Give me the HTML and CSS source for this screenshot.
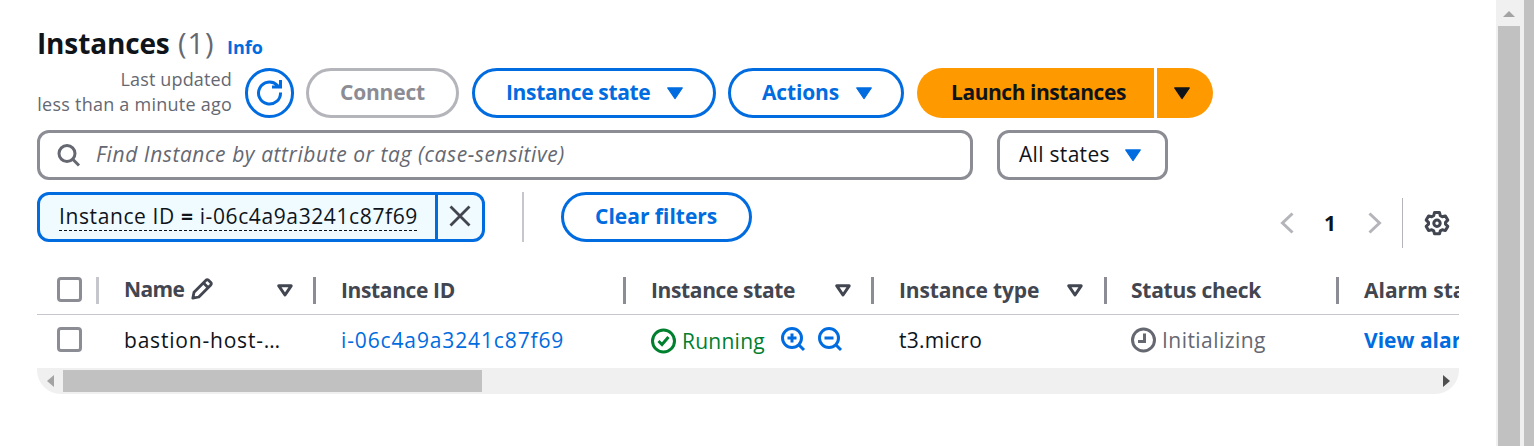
FILE: index.html
```html
<!DOCTYPE html>
<html lang="en">
<head>
<meta charset="utf-8">
<title>Instances</title>
<link rel="stylesheet" href="styles.css">
</head>
<body>
<div class="page">
<main class="panel">
  <header class="title"><h1>Instances</h1><span class="count">(1)</span><a class="info">Info</a></header>

  <div class="toolbar">
    <div class="updated"><span class="u1">Last updated</span><span class="u2">less than a minute ago</span></div>
    <button class="btn refresh"><svg width="28" height="28" viewBox="0 0 28 28" fill="none" stroke="currentColor" stroke-width="3"><path d="M24.500 13.500A11 11 0 1 1 21 6L23.500 8.500M24.500 1v7h-8.500"/></svg></button>
    <button class="btn connect"><span>Connect</span></button>
    <button class="btn state"><span>Instance state</span><svg class="caret" viewBox="0 0 16 13"><path d="M1.500 1.500h13L8 11z"/></svg></button>
    <button class="btn actions"><span>Actions</span><svg class="caret" viewBox="0 0 16 13"><path d="M1.500 1.500h13L8 11z"/></svg></button>
    <div class="launch"><button class="launch-main"><span>Launch instances</span></button><button class="launch-more"><svg class="caret" viewBox="0 0 16 13"><path d="M1.500 1.500h13L8 11z"/></svg></button></div>
  </div>

  <div class="filters">
    <div class="search"><svg width="24" height="24" viewBox="0 0 24 24" fill="none" stroke="currentColor" stroke-width="3"><circle cx="10" cy="10.500" r="8"/><path d="M15.500 16l6.500 6.500"/></svg><span>Find Instance by attribute or tag (case-sensitive)</span></div>
    <div class="select"><span>All states</span><svg class="caret" viewBox="0 0 16 13"><path d="M1.500 1.500h13L8 11z"/></svg></div>
  </div>

  <div class="tokens">
    <div class="token"><div class="token-label"><span>Instance ID <b>=</b> i-06c4a9a3241c87f69</span></div><div class="token-x"><svg width="22" height="22" viewBox="0 0 22 22" fill="none" stroke="currentColor" stroke-width="2.800"><path d="M1.500 1.500l19 19M20.500 1.500l-19 19"/></svg></div></div>
    <i class="rule"></i>
    <button class="btn clear"><span>Clear filters</span></button>
    <nav class="pager">
      <svg width="14" height="22" viewBox="0 0 14 22" fill="none" stroke="currentColor" stroke-width="3"><path d="M12.500 1.500L2.500 11l10 9.500"/></svg>
      <b>1</b>
      <svg width="14" height="22" viewBox="0 0 14 22" fill="none" stroke="currentColor" stroke-width="3"><path d="M1.500 1.500L11.500 11l-10 9.500"/></svg>
      <i></i>
      <svg class="gear" width="26" height="26" viewBox="0 0 26 26" fill="none" stroke="currentColor" stroke-width="3" stroke-linejoin="round"><path d="M10.500 2.500h5l.8 3.200 2 1.100 3.100-.9 2.400 4.200-2.300 2.300v1.800l2.300 2.200-2.400 4.200-3.100-.9-2 1.200-.8 2.900h-5l-.8-2.900-2-1.200-3.100.9-2.400-4.200 2.300-2.200v-1.800l-2.300-2.300 2.400-4.200 3.100.9 2-1.100z"/><circle cx="13" cy="13.200" r="3.200"/></svg>
    </nav>
  </div>

  <section class="table">
    <div class="row head">
      <div class="cell"><i class="check"></i></div>
      <div class="cell name"><span>Name</span><svg class="pencil" width="22" height="22" viewBox="0 0 22 22" fill="none" stroke="currentColor" stroke-width="2.800" stroke-linejoin="round"><path d="M1.800 20.200l1.200-6L15 2.200q1.200-1 2.500 0l2.300 2.300q1 1.200 0 2.500L7.800 19z"/><path d="M12.500 5l4.500 4.500"/></svg><svg class="sort" width="16" height="13" viewBox="0 0 16 13"><path d="M1.800 1.800h12.400L8 11z"/></svg></div>
      <div class="cell"><span class="t-id">Instance ID</span></div>
      <div class="cell"><span class="t-state">Instance state</span><svg class="sort" width="16" height="13" viewBox="0 0 16 13"><path d="M1.800 1.800h12.400L8 11z"/></svg></div>
      <div class="cell"><span class="t-type">Instance type</span><svg class="sort type-sort" width="16" height="13" viewBox="0 0 16 13"><path d="M1.800 1.800h12.400L8 11z"/></svg></div>
      <div class="cell status"><span class="t-status">Status check</span></div>
      <div class="cell"><span class="t-alarm">Alarm status</span></div>
    </div>
    <div class="row body">
      <div class="cell"><i class="check"></i></div>
      <div class="cell"><span class="v-name">bastion-host-…</span></div>
      <div class="cell"><a class="v-id">i-06c4a9a3241c87f69</a></div>
      <div class="cell running"><svg width="26" height="26" viewBox="0 0 26 26" fill="none" stroke="currentColor" stroke-width="3"><circle cx="12.500" cy="13" r="11"/><path d="M7.500 13l3.500 3.500 6.500-7.500"/></svg><span>Running</span>
        <svg class="zoom in" width="26" height="26" viewBox="0 0 26 26" fill="none" stroke="currentColor" stroke-width="3"><circle cx="12" cy="12" r="9.500"/><path d="M18.500 18.500l5.500 5.500M7.500 12h9M12 7.500v9"/></svg>
        <svg class="zoom" width="26" height="26" viewBox="0 0 26 26" fill="none" stroke="currentColor" stroke-width="3"><circle cx="12" cy="12" r="9.500"/><path d="M18.500 18.500l5.500 5.500M7.500 12h9"/></svg></div>
      <div class="cell"><span class="v-type">t3.micro</span></div>
      <div class="cell status init"><svg width="26" height="26" viewBox="0 0 26 26" fill="none" stroke="currentColor" stroke-width="3"><circle cx="12.500" cy="13" r="11"/><path d="M13.500 6.500v8H7"/></svg><span>Initializing</span></div>
      <div class="cell"><a class="v-alarm">View alarms</a></div>
    </div>
    <div class="hscroll"><svg width="7" height="12" viewBox="0 0 7 12"><path d="M7 0v12L0 6z" fill="#a3a3a3"/></svg><i></i><svg class="right" width="7" height="12" viewBox="0 0 7 12"><path d="M0 0v12l7-6z" fill="#505050"/></svg></div>
  </section>
</main>
<aside class="vscroll"><svg width="12" height="6" viewBox="0 0 12 6"><path d="M6 0l6 6H0z" fill="#a3a3a3"/></svg><i></i></aside>
<aside class="edge"></aside>
</div>
</body>
</html>
```

FILE: styles.css
```css
* { box-sizing: border-box; }
body { margin: 0; background: #fff; color: #0f141a; font: 21px/30px "Open Sans", "Noto Sans", sans-serif; }
.page { display: flex; height: 446px; overflow: hidden; white-space: nowrap; }
.panel { width: 1496px; padding-left: 37px; }
svg { display: block; flex: none; }
button { font: inherit; padding: 0; border: 0; }
.title { display: flex; align-items: baseline; height: 68px; padding-top: 23px; }
h1 { margin: 0; width: 141px; font-size: 28px; line-height: 40px; letter-spacing: -.15px; }
.count { width: 49px; font-size: 29px; letter-spacing: .9px; color: #656871; }
.info { font-size: 18px; font-weight: 700; color: #006ce0; }

.toolbar { display: flex; height: 50px; }
.updated { display: flex; flex-direction: column; width: 195px; height: 50px; margin: -1px 13px 0 0; font-size: 18px; line-height: 25px; letter-spacing: .24px; color: #656871; text-align: right; }
.u1 { letter-spacing: .15px; }
.btn { display: flex; align-items: center; height: 50px; border: 3px solid #006ce0; border-radius: 25px; color: #006ce0; background: #fff; font-weight: 700; padding-left: 31px; }
.btn span, .launch-main span { padding-bottom: 2px; text-align: left; }
.caret { width: 18px; height: 15px; fill: currentColor; stroke: currentColor; stroke-linejoin: round; }
.refresh { width: 49px; padding: 0; justify-content: center; margin-right: 12px; }
.connect { width: 153px; margin-right: 13px; color: #8c8c94; border-color: #b4b4bb; letter-spacing: -.2px; }
.state { width: 244px; margin-right: 12px; letter-spacing: -.35px; }
.actions { width: 176px; margin-right: 13px; letter-spacing: -.15px; }
.state span { width: 160px; }
.actions span { width: 93px; }
.launch { display: flex; gap: 3px; }
.launch button { background: #ff9900; color: #0f141a; font-weight: 700; display: flex; align-items: center; }
.launch .launch-main { width: 237px; padding-left: 34px; border-radius: 25px 0 0 25px; letter-spacing: -.45px; }
.launch .launch-more { width: 56px; padding-left: 16px; border-radius: 0 25px 25px 0; }

.filters { display: flex; gap: 24px; margin-top: 12px; height: 50px; }
.search, .select { display: flex; align-items: center; border: 3px solid #8c8c94; border-radius: 12px; }
.search { width: 936px; padding-left: 17px; color: #656871; font-style: italic; letter-spacing: .57px; }
.search svg { margin-right: 15px; }
.search span { padding-bottom: 2px; }
.select { width: 171px; padding-left: 19px; letter-spacing: .3px; }
.select span { width: 105px; padding-bottom: 2px; }
.select svg { color: #006ce0; }

.tokens { display: flex; margin-top: 12px; height: 50px; }
.token { display: flex; width: 448px; border: 3px solid #006ce0; border-radius: 12px; background: #f0fbff; }
.token-label { width: 398px; padding: 7px 0 0 19px; border-right: 3px solid #006ce0; }
.token-label span { display: block; width: 358px; height: 29px; line-height: 29px; letter-spacing: .61px; border-bottom: 1px dashed #0f141a; }
.token-x { padding: 10px 0 0 11px; color: #424650; }
.rule { width: 2px; margin-left: 37px; background: #c6c6cd; }
.clear { width: 191px; margin-left: 37px; }
.pager { display: flex; align-items: center; margin: 6px 0 0 528px; height: 50px; color: #b4b4bb; }
.pager b { width: 74px; padding-right: 2px; text-align: center; color: #0f141a; }
.pager i { width: 1px; height: 50px; margin: 0 21px 0 20px; background: #b4b4bb; }
.pager .gear { color: #424650; }

.table { width: 1422px; margin-top: 24px; overflow: hidden; }
.row { display: grid; grid-template-columns: 62px 217px 310px 248px 233px 232px 240px; }
.head { height: 49px; border-bottom: 1px solid #c6c6cd; color: #424650; font-weight: 700; }
.body { height: 53px; padding-bottom: 4px; }
.cell { display: flex; align-items: center; padding-left: 25px; }
.cell:first-child { padding-left: 20px; }
.head .status, .body .status { padding-left: 24px; }
.head .cell { height: 27px; margin-top: 11px; padding-bottom: 2px; border-right: 3px solid #8c8c94; }
.head .cell:first-child { border-color: #c6c6cd; }
.check { width: 25px; height: 25px; border: 3px solid #8c8c94; border-radius: 4px; }
.sort { margin-left: auto; margin-right: 20px; fill: none; stroke: #424650; stroke-width: 3; stroke-linejoin: round; }
.type-sort { margin-right: 21px; }
.head .sort { margin-top: 2px; }
.head .name { padding-bottom: 4px; }
.name span { width: 67px; letter-spacing: -.6px; }
.head .name .sort { margin-top: 4px; }
.t-id, .t-state { letter-spacing: -.37px; }
.t-type { letter-spacing: -.15px; }
.t-status { letter-spacing: -.25px; }
.v-name { letter-spacing: .8px; }
.v-id, .v-alarm { color: #006ce0; }
.v-id { letter-spacing: .87px; }
.v-type { letter-spacing: .25px; }
.v-alarm { font-weight: 700; }
.running { padding-top: 3px; color: #00802f; }
.running span { width: 98px; margin-left: 5px; letter-spacing: .25px; }
.zoom { margin-bottom: 4px; color: #006ce0; }
.in { margin-right: 11px; }
.init { color: #656871; }
.init span { margin-left: 5px; letter-spacing: .45px; }
.hscroll { display: flex; align-items: center; height: 26px; padding: 0 9px 0 10px; background: #f0f0f0; border-radius: 0 0 24px 24px; }
.hscroll i { width: 419px; height: 22px; margin-left: 9px; background: #c1c1c1; }
.right { margin-left: auto; }
.vscroll { width: 28px; padding: 11px 0 0 2px; background: #f0f0f0; }
.vscroll svg { margin-left: 5px; }
.vscroll i { display: block; width: 22px; height: 420px; margin-top: 9px; background: #c1c1c1; }
.edge { width: 10px; background: #c1c1c1; }
```
